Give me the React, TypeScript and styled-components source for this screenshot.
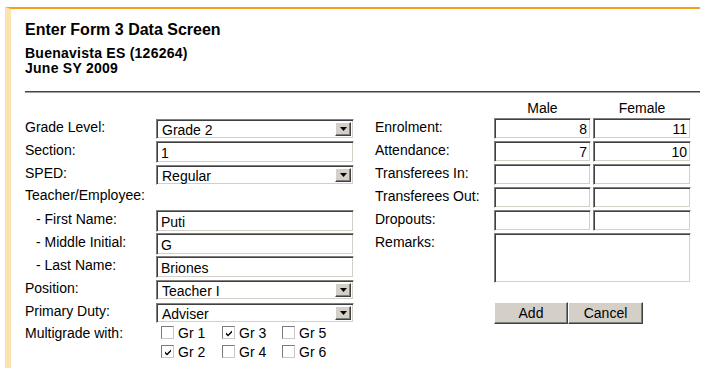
import React from "react";
import styled, { createGlobalStyle } from "styled-components";

const GlobalStyle = createGlobalStyle`
  body {
    margin: 0;
    background: #fff;
    color: #000;
    font-family: "Liberation Sans", Arial, sans-serif;
  }
`;

type Row = { label: string; male: string; female: string };

const counts: Row[] = [
  { label: "Enrolment:", male: "8", female: "11" },
  { label: "Attendance:", male: "7", female: "10" },
  { label: "Transferees In:", male: "", female: "" },
  { label: "Transferees Out:", male: "", female: "" },
  { label: "Dropouts:", male: "", female: "" },
];

const grades = [
  { name: "Gr 1", checked: false },
  { name: "Gr 2", checked: true },
  { name: "Gr 3", checked: true },
  { name: "Gr 4", checked: false },
  { name: "Gr 5", checked: false },
  { name: "Gr 6", checked: false },
];

const Arrow = () => (
  <svg width="7" height="4" viewBox="0 0 7 4">
    <path d="M0 0 H7 L3.5 4 Z" fill="#000" />
  </svg>
);

const Tick = () => (
  <svg width="8" height="8" viewBox="0 0 8 8">
    <path d="M1 3.5 L3 5.5 L7 1.5 V3.5 L3 7.5 L1 5.5 Z" fill="#000" />
  </svg>
);

const Dropdown = ({ value }: { value: string }) => (
  <SelectBox>
    <SelectValue>{value}</SelectValue>
    <DropButton>
      <Arrow />
    </DropButton>
  </SelectBox>
);

const App = () => {
  return (
    <Page>
      <GlobalStyle />
      <Panel>
        <Title>Enter Form 3 Data Screen</Title>
        <School>
          Buenavista ES (126264)
          <br />
          June SY 2009
        </School>
        <Rule />
        <Form>
          <LeftGrid>
            <Label>Grade Level:</Label>
            <Dropdown value="Grade 2" />
            <Label>Section:</Label>
            <TextInput defaultValue="1" />
            <Label>SPED:</Label>
            <Dropdown value="Regular" />
            <Label $top={0}>Teacher/Employee:</Label>
            <span />
            <Label $indent>- First Name:</Label>
            <TextInput defaultValue="Puti" />
            <Label $indent>- Middle Initial:</Label>
            <TextInput defaultValue="G" />
            <Label $indent>- Last Name:</Label>
            <TextInput defaultValue="Briones" />
            <Label>Position:</Label>
            <Dropdown value="Teacher I" />
            <Label>Primary Duty:</Label>
            <Dropdown value="Adviser" />
            <Label $top={0}>Multigrade with:</Label>
            <CheckGrid>
              {grades.map((g) => (
                <CheckItem key={g.name}>
                  <CheckBox>{g.checked && <Tick />}</CheckBox>
                  {g.name}
                </CheckItem>
              ))}
            </CheckGrid>
          </LeftGrid>

          <RightGrid>
            <span />
            <Head>Male</Head>
            <Head>Female</Head>
            {counts.map((r) => (
              <React.Fragment key={r.label}>
                <Label>{r.label}</Label>
                <NumInput defaultValue={r.male} />
                <NumInput defaultValue={r.female} />
              </React.Fragment>
            ))}
            <Label>Remarks:</Label>
            <Remarks />
            <Buttons>
              <Button $w={74}>Add</Button>
              <Button $w={75}>Cancel</Button>
            </Buttons>
          </RightGrid>
        </Form>
      </Panel>
    </Page>
  );
};

export default App;

const Page = styled.div`
  padding: 7px 0 0 5px;
`;

const Panel = styled.div`
  width: 675px;
  height: 359px;
  border-top: 2px solid #f2a11f;
  border-left: 6px solid #fde4ae;
  padding-left: 14px;
`;

const Title = styled.h1`
  margin: 0;
  padding-top: 11px;
  font-size: 16px;
  line-height: 19px;
  font-weight: bold;
`;

const School = styled.div`
  margin-top: 7px;
  font-size: 14px;
  line-height: 15px;
  font-weight: bold;
  letter-spacing: 0.25px;
`;

const Rule = styled.div`
  margin-top: 15px;
  border-top: 1px solid #444;
  border-bottom: 1px solid #a0a0a0;
`;

const Form = styled.div`
  display: flex;
  gap: 21px;
  padding-top: 8px;
  font-size: 14px;
`;

const LeftGrid = styled.div`
  margin-top: 17px;
  display: grid;
  grid-template-columns: 131px 198px;
  grid-template-rows: repeat(9, 23px) auto;
`;

const RightGrid = styled.div`
  display: grid;
  grid-template-columns: 117px 97px 98px;
  grid-template-rows: 15px repeat(5, 21px) 50px auto;
  column-gap: 2px;
  row-gap: 2px;
`;

const Label = styled.div<{ $indent?: boolean; $top?: number }>`
  padding-top: ${(p) => p.$top ?? 1}px;
  padding-left: ${(p) => (p.$indent ? 11 : 0)}px;
  line-height: 16px;
  white-space: nowrap;
`;

const Head = styled.div`
  text-align: center;
  line-height: 15px;
`;

const sunken = `
  box-sizing: border-box;
  background: #fff;
  border: 1px solid;
  border-color: #808080 #fff #fff #808080;
  box-shadow: inset 1px 1px 0 #404040, inset -1px -1px 0 #d4d0c8;
`;

const TextInput = styled.input`
  ${sunken}
  width: 198px;
  height: 22px;
  margin: 0;
  padding: 1px 4px 0;
  font: 14px "Liberation Sans", Arial, sans-serif;
  color: #000;
  outline: none;
`;

const NumInput = styled(TextInput)`
  width: 100%;
  height: 21px;
  text-align: right;
  padding: 1px 3px 0;
`;

const Remarks = styled.textarea`
  ${sunken}
  grid-column: 2 / span 2;
  width: 100%;
  height: 50px;
  margin: 0;
  resize: none;
  outline: none;
`;

const SelectBox = styled.div`
  ${sunken}
  height: 20px;
  margin-top: 1px;
  display: flex;
  padding: 2px;
`;

const SelectValue = styled.span`
  flex: 1;
  padding-left: 3px;
  line-height: 17px;
`;

const DropButton = styled.span`
  box-sizing: border-box;
  width: 16px;
  display: flex;
  align-items: center;
  justify-content: center;
  background: #d4d0c8;
  border: 1px solid;
  border-color: #fff #404040 #404040 #fff;
  box-shadow: inset -1px -1px 0 #808080;
`;

const CheckGrid = styled.div`
  margin-top: -2px;
  display: grid;
  grid-auto-flow: column;
  grid-template-rows: 19px 19px;
  grid-template-columns: 61px 60px 60px;
  padding-left: 5px;
`;

const CheckItem = styled.label`
  display: flex;
  align-items: center;
  gap: 4px;
`;

const CheckBox = styled.span`
  box-sizing: border-box;
  width: 13px;
  height: 13px;
  display: flex;
  align-items: center;
  justify-content: center;
  background: #fff;
  border: 1px solid;
  border-color: #7a7a7a #c8c8c8 #c8c8c8 #7a7a7a;
`;

const Buttons = styled.div`
  grid-column: 2 / span 2;
  margin-top: 17px;
  display: flex;
`;

const Button = styled.button<{ $w: number }>`
  width: ${(p) => p.$w}px;
  height: 22px;
  padding: 0;
  background: #d4d0c8;
  font: 14px "Liberation Sans", Arial, sans-serif;
  color: #000;
  border: 1px solid;
  border-color: #fff #404040 #404040 #fff;
  box-shadow: inset -1px -1px 0 #808080;
`;
